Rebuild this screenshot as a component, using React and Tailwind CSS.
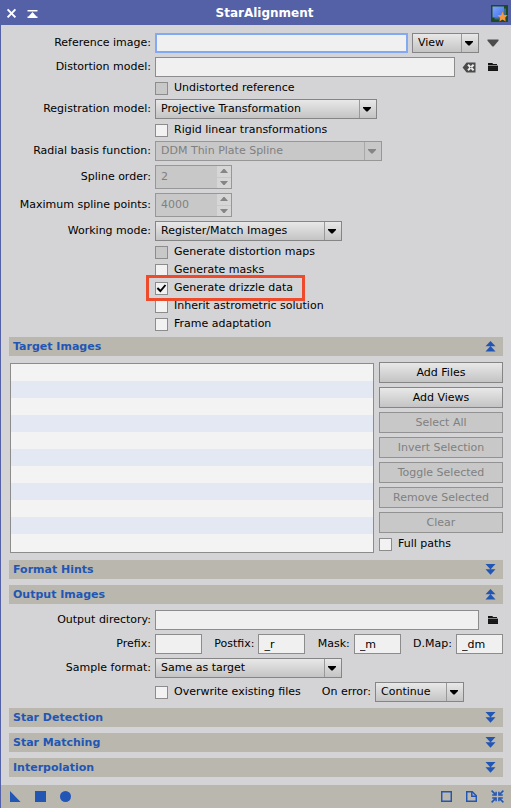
import React, { useState } from "react";
import clsx from "clsx";

const TARGET_ROWS = Array.from({ length: 11 }, (_, i) => i);

const FolderIcon = () => (
  <svg width="10" height="10" viewBox="0 0 10 10" fill="#141414">
    <path d="M0 1h4.2l1 1H9v1H0z" />
    <path d="M0 3.6h10V9H0z" />
    <path d="M0 5.4h10M0 7.2h10" stroke="#333" strokeWidth="0.4" />
  </svg>
);

const ClearIcon = () => (
  <svg width="14" height="11" viewBox="0 0 14 11">
    <path d="M4.6.5h8.9v10H4.6L.6 5.5z" fill="#4a4a4a" />
    <path
      d="M6 2.8l5.6 5.4M11.6 2.8L6 8.2"
      stroke="#ececec"
      strokeWidth="2"
      fill="none"
    />
    <circle cx="8.8" cy="5.5" r="0.7" fill="#4a4a4a" />
  </svg>
);

const DoubleArrow = ({ open }) => (
  <svg width="11" height="11" viewBox="0 0 11 11" fill="#2256b4">
    {open ? (
      <path d="M5.5 0L10.5 5.3H.5zM5.5 5L10.5 10.6H.5z" />
    ) : (
      <path d="M.5 0h10L5.5 5.6zM.5 5.3h10L5.5 10.8z" />
    )}
  </svg>
);

const AppIcon = () => (
  <svg width="17" height="17" viewBox="0 0 17 17">
    <defs>
      <linearGradient id="tile" x1="0" y1="0" x2="1" y2="1">
        <stop offset="0" stopColor="#7fa6ff" />
        <stop offset="1" stopColor="#3d6fe6" />
      </linearGradient>
    </defs>
    <path d="M0 0h17v17H0z" fill="#1d4a22" />
    <path d="M3.5 3.5h11.5v11H3.5z" fill="#3a6b8c" />
    <path d="M1.5 1.5h11.5v11H1.5z" fill="url(#tile)" />
    <path
      d="M11.5 6.6l1.4 3.5 3.8.2-2.9 2.4 1 3.8-3.3-2.1-3.2 2.1.9-3.8-2.9-2.4 3.8-.2z"
      fill="#f7973f"
    />
  </svg>
);

const FieldRow = ({ label, htmlFor, children }) => (
  <div className="flex items-center gap-1">
    <label htmlFor={htmlFor} className="w-[142px] shrink-0 text-right">
      {label}
    </label>
    <div className="flex min-w-0 flex-1 items-center">{children}</div>
  </div>
);

const TextField = ({ className, ...props }) => (
  <input
    type="text"
    className={clsx(
      "h-5 min-w-0 border border-[#8c8c8c] bg-[#f0f0f0] px-[5px] outline-none",
      className
    )}
    {...props}
  />
);

const ComboBox = ({ id, value, width, disabled, label }) => (
  <div className={clsx("relative h-5", width)}>
    <select
      id={id}
      aria-label={label}
      disabled={disabled}
      className={clsx(
        "h-5 w-full appearance-none border pr-5 pl-[5px] leading-4 outline-none",
        disabled
          ? "border-[#979797] bg-[#c8c8c8] text-[#808080] opacity-100"
          : "border-[#858585] bg-linear-to-b from-[#e8e8e8] to-[#c4c4c4]"
      )}
    >
      <option>{value}</option>
    </select>
    <span
      className={clsx(
        "pointer-events-none absolute inset-y-px right-px flex w-[17px] items-center justify-center border-l pr-0.5",
        disabled ? "border-[#a8a8a8] text-[#858585]" : "border-[#999] text-black"
      )}
    >
      <svg width="8" height="5" viewBox="0 0 8 5" fill="currentColor">
        <path d="M0 0h8v1L4.6 4.6H3.4L0 1z" />
      </svg>
    </span>
  </div>
);

const SpinBox = ({ id, value }) => (
  <div className="flex h-6 w-[77px] border border-[#979797] bg-[#c8c8c8]">
    <input
      id={id}
      type="text"
      disabled
      defaultValue={value}
      className="min-w-0 flex-1 pl-[5px] text-[#808080] outline-none"
    />
    <div className="flex w-[14px] flex-col gap-px text-[#858585]">
      <button
        type="button"
        disabled
        aria-label="Increase"
        className="flex flex-1 items-center justify-center bg-[#d6d6d6]"
      >
        <svg width="8" height="4" viewBox="0 0 8 4" fill="currentColor">
          <path d="M3.4 0h1.2L8 4H0z" />
        </svg>
      </button>
      <button
        type="button"
        disabled
        aria-label="Decrease"
        className="flex flex-1 items-center justify-center bg-[#d6d6d6]"
      >
        <svg width="8" height="4" viewBox="0 0 8 4" fill="currentColor">
          <path d="M0 0h8L4.6 4H3.4z" />
        </svg>
      </button>
    </div>
  </div>
);

const CheckBox = ({ label, disabled, defaultChecked, highlighted }) => (
  <label className="relative flex h-3.5 items-center gap-1.5">
    <span className="grid h-[13px] w-[13px]">
      <input
        type="checkbox"
        disabled={disabled}
        defaultChecked={defaultChecked}
        className={clsx(
          "peer col-start-1 row-start-1 h-[13px] w-[13px] appearance-none border border-[#8c8c8c]",
          disabled ? "bg-[#c8c8c8]" : "bg-[#f2f2f2]"
        )}
      />
      <svg
        viewBox="0 0 13 13"
        className="pointer-events-none invisible col-start-1 row-start-1 peer-checked:visible"
        fill="none"
        stroke="#000"
        strokeWidth="1.9"
      >
        <path d="M2.4 6l3 3 5.1-6" />
      </svg>
    </span>
    {label}
    {highlighted && (
      <span className="pointer-events-none absolute -top-1.5 -right-3 -bottom-1.5 -left-[9px] z-10 border-[3px] border-[#ee4a2c]" />
    )}
  </label>
);

const PushButton = ({ children, disabled }) => (
  <button
    type="button"
    disabled={disabled}
    className={clsx(
      "h-[21px] border text-center",
      disabled
        ? "border-[#929292] bg-[#c8c8c8] text-[#808080]"
        : "border-[#858585] bg-linear-to-b from-[#e8e8e8] to-[#c4c4c4]"
    )}
  >
    {children}
  </button>
);

const Section = ({ title, defaultOpen = false, children }) => {
  const [open, setOpen] = useState(defaultOpen);

  return (
    <>
      <h2>
        <button
          type="button"
          aria-expanded={open}
          onClick={() => setOpen(!open)}
          className="flex h-[19px] w-full items-center justify-between bg-[#bab7af] pr-[7px] pl-1 font-bold text-[#2256b4]"
        >
          {title}
          <DoubleArrow open={open} />
        </button>
      </h2>
      {open && children}
    </>
  );
};

const ToolButton = ({ label, className, children }) => (
  <button
    type="button"
    aria-label={label}
    className={clsx("flex shrink-0 items-center justify-center", className)}
  >
    {children}
  </button>
);

const App = () => {
  return (
    <div className="flex min-h-screen flex-col bg-[#d4d4d6] font-['DejaVu_Sans',sans-serif] text-[11px] leading-[14px] text-black">
      <header className="flex h-[25px] items-center bg-[#5461a6] pr-[3px] pl-1.5 text-white">
        <div className="flex items-center gap-2.5 pt-0.5">
          <ToolButton label="Close" className="w-[11px]">
            <svg width="11" height="11" viewBox="0 0 11 11" stroke="currentColor" strokeWidth="2">
              <path d="M1.6 1.4l7.8 8M9.4 1.4l-7.8 8" />
            </svg>
          </ToolButton>
          <ToolButton label="Shade" className="w-[11px]">
            <svg width="11" height="10" viewBox="0 0 11 10" fill="currentColor">
              <path d="M.5 1h10v1.5H.5zM5.5 3L9.5 7.4h1v1.6H.5V7.4h1z" />
            </svg>
          </ToolButton>
        </div>
        <h1 className="flex-1 text-center text-xs font-bold">StarAlignment</h1>
        <div className="pt-0.5">
          <AppIcon />
        </div>
      </header>

      <main className="flex flex-1 flex-col gap-1.5 border-l border-[#5461a6] p-2">
        <div className="flex flex-col gap-1">
          <FieldRow label="Reference image:" htmlFor="reference">
            <input
              id="reference"
              type="text"
              className="h-5 min-w-0 flex-1 border-2 border-[#83a9f3] bg-[#f0f0f0] px-1 outline-none"
            />
            <div className="ml-1">
              <ComboBox label="Reference type" value="View" width="w-[67px]" />
            </div>
            <ToolButton label="Select view" className="ml-1 w-5">
              <svg width="12" height="8" viewBox="0 0 12 8" fill="#4c4c4c">
                <path d="M.5.5h11v1.2L6.6 7.4H5.4L.5 1.7z" />
              </svg>
            </ToolButton>
          </FieldRow>
          <FieldRow label="Distortion model:" htmlFor="distortion">
            <TextField id="distortion" className="flex-1" />
            <ToolButton label="Clear" className="ml-1 w-5">
              <ClearIcon />
            </ToolButton>
            <ToolButton label="Select file" className="ml-1 w-5">
              <FolderIcon />
            </ToolButton>
          </FieldRow>
          <FieldRow>
            <CheckBox label="Undistorted reference" disabled />
          </FieldRow>
          <FieldRow label="Registration model:" htmlFor="registration">
            <ComboBox id="registration" value="Projective Transformation" width="w-[222px]" />
          </FieldRow>
          <FieldRow>
            <CheckBox label="Rigid linear transformations" />
          </FieldRow>
          <FieldRow label="Radial basis function:" htmlFor="radial">
            <ComboBox id="radial" value="DDM Thin Plate Spline" width="w-[227px]" disabled />
          </FieldRow>
          <FieldRow label="Spline order:" htmlFor="order">
            <SpinBox id="order" value="2" />
          </FieldRow>
          <FieldRow label="Maximum spline points:" htmlFor="points">
            <SpinBox id="points" value="4000" />
          </FieldRow>
          <FieldRow label="Working mode:" htmlFor="mode">
            <ComboBox id="mode" value="Register/Match Images" width="w-[187px]" />
          </FieldRow>
          <FieldRow>
            <CheckBox label="Generate distortion maps" disabled />
          </FieldRow>
          <FieldRow>
            <CheckBox label="Generate masks" />
          </FieldRow>
          <FieldRow>
            <CheckBox label="Generate drizzle data" defaultChecked highlighted />
          </FieldRow>
          <FieldRow>
            <CheckBox label="Inherit astrometric solution" />
          </FieldRow>
          <FieldRow>
            <CheckBox label="Frame adaptation" />
          </FieldRow>
        </div>

        <Section title="Target Images" defaultOpen>
          <div className="flex gap-[5px]">
            <ul className="my-px ml-px flex-1 border border-[#8c8c8c] bg-[#f3f3f3] pb-px">
              {TARGET_ROWS.map((row) => (
                <li key={row} className="h-[17px] even:bg-[#e4e8f3]" />
              ))}
            </ul>
            <div className="flex w-[124px] flex-col gap-1">
              <PushButton>Add Files</PushButton>
              <PushButton>Add Views</PushButton>
              <PushButton disabled>Select All</PushButton>
              <PushButton disabled>Invert Selection</PushButton>
              <PushButton disabled>Toggle Selected</PushButton>
              <PushButton disabled>Remove Selected</PushButton>
              <PushButton disabled>Clear</PushButton>
              <CheckBox label="Full paths" />
            </div>
          </div>
        </Section>

        <Section title="Format Hints" />

        <Section title="Output Images" defaultOpen>
          <div className="flex flex-col gap-1">
            <FieldRow label="Output directory:" htmlFor="directory">
              <TextField id="directory" className="flex-1" />
              <ToolButton label="Select directory" className="ml-1 w-5">
                <FolderIcon />
              </ToolButton>
            </FieldRow>
            <FieldRow label="Prefix:" htmlFor="prefix">
              <div className="flex flex-1 items-center justify-between">
                <TextField id="prefix" className="w-[47px]" />
                <div className="flex items-center gap-1">
                  <label htmlFor="postfix">Postfix:</label>
                  <TextField id="postfix" defaultValue="_r" className="w-[47px]" />
                </div>
                <div className="flex items-center gap-1">
                  <label htmlFor="mask">Mask:</label>
                  <TextField id="mask" defaultValue="_m" className="w-[47px]" />
                </div>
                <div className="flex items-center gap-1">
                  <label htmlFor="dmap">D.Map:</label>
                  <TextField id="dmap" defaultValue="_dm" className="w-[47px]" />
                </div>
              </div>
            </FieldRow>
            <FieldRow label="Sample format:" htmlFor="format">
              <ComboBox id="format" value="Same as target" width="w-[187px]" />
            </FieldRow>
            <FieldRow>
              <CheckBox label="Overwrite existing files" />
              <div className="ml-[21px] flex h-5 items-center gap-1">
                <label htmlFor="on-error">On error:</label>
                <ComboBox id="on-error" value="Continue" width="w-[89px]" />
              </div>
            </FieldRow>
          </div>
        </Section>

        <Section title="Star Detection" />
        <Section title="Star Matching" />
        <Section title="Interpolation" />
      </main>

      <footer className="flex h-[23px] items-center justify-between border-l border-[#5461a6] bg-[#bab7af] pr-[7px] pl-[9px] text-[#2256b4]">
        <div className="flex gap-3.5">
          <ToolButton label="New instance">
            <svg width="11" height="11" viewBox="0 0 11 11" fill="currentColor">
              <path d="M0 0l10.6 11H0z" />
            </svg>
          </ToolButton>
          <ToolButton label="Apply">
            <svg width="11" height="11" viewBox="0 0 11 11" fill="currentColor">
              <path d="M0 0h11v11H0z" />
            </svg>
          </ToolButton>
          <ToolButton label="Apply global">
            <svg width="11" height="11" viewBox="0 0 11 11" fill="currentColor">
              <circle cx="5.5" cy="5.5" r="5.5" />
            </svg>
          </ToolButton>
        </div>
        <div className="flex items-center gap-3.5">
          <ToolButton label="Browse documentation">
            <svg width="11" height="11" viewBox="0 0 11 11" fill="none" stroke="currentColor" strokeWidth="1.5">
              <path d="M.7.7h9.6v9.6H.7z" />
            </svg>
          </ToolButton>
          <ToolButton label="Edit instance">
            <svg width="11" height="11" viewBox="0 0 11 11" fill="none" stroke="currentColor" strokeWidth="1.5">
              <path d="M.7.7h5.5l4.1 4.1v5.5H.7z" />
              <path d="M5.8.7v4.5h4.5" />
            </svg>
          </ToolButton>
          <ToolButton label="Reset">
            <svg width="13" height="13" viewBox="0 0 13 13" fill="none" stroke="currentColor" strokeWidth="1.5">
              <path d="M.6.6l4 4M12.4.6l-4 4M.6 12.4l4-4M12.4 12.4l-4-4" />
              <path d="M5.1 1.8v3.3H1.2M7.9 1.8v3.3h3.9M5.1 11.2V7.9H1.2M7.9 11.2V7.9h3.9" />
            </svg>
          </ToolButton>
        </div>
      </footer>
    </div>
  );
};

export default App;
